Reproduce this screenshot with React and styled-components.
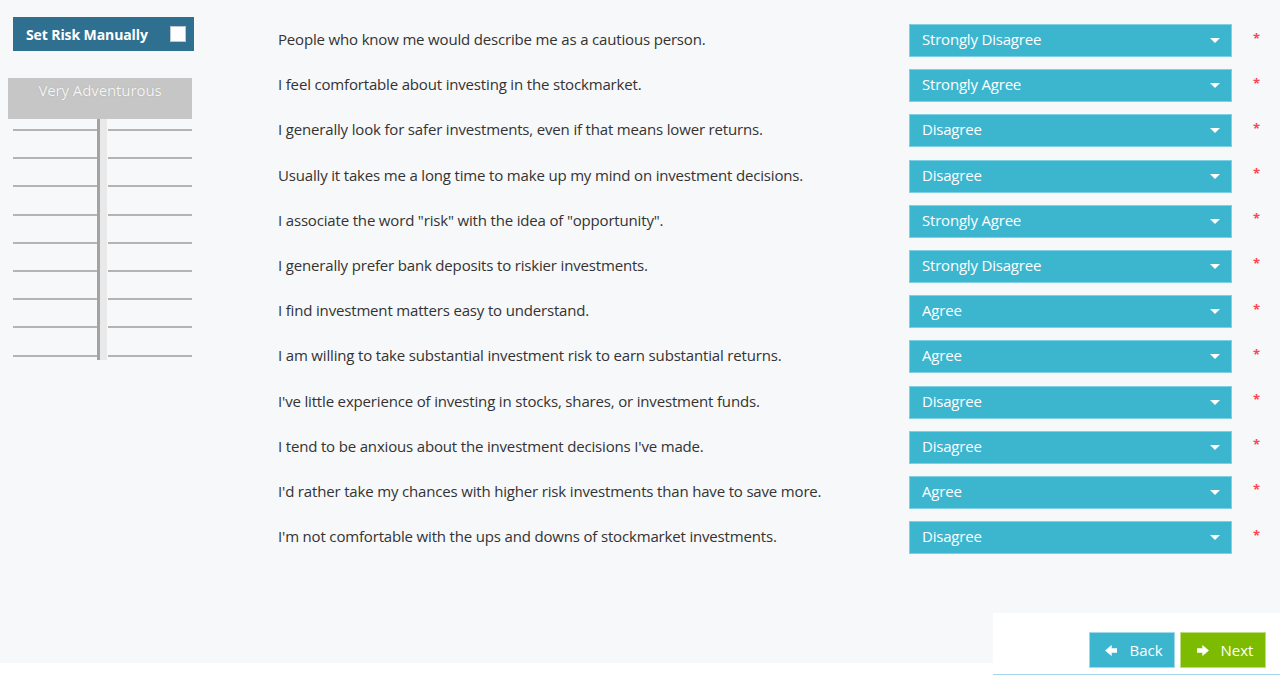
import React, { useState } from "react";
import styled, { createGlobalStyle } from "styled-components";

const questions = [
  ["People who know me would describe me as a cautious person.", "Strongly Disagree"],
  ["I feel comfortable about investing in the stockmarket.", "Strongly Agree"],
  ["I generally look for safer investments, even if that means lower returns.", "Disagree"],
  ["Usually it takes me a long time to make up my mind on investment decisions.", "Disagree"],
  ['I associate the word "risk" with the idea of "opportunity".', "Strongly Agree"],
  ["I generally prefer bank deposits to riskier investments.", "Strongly Disagree"],
  ["I find investment matters easy to understand.", "Agree"],
  ["I am willing to take substantial investment risk to earn substantial returns.", "Agree"],
  ["I've little experience of investing in stocks, shares, or investment funds.", "Disagree"],
  ["I tend to be anxious about the investment decisions I've made.", "Disagree"],
  ["I'd rather take my chances with higher risk investments than have to save more.", "Agree"],
  ["I'm not comfortable with the ups and downs of stockmarket investments.", "Disagree"],
];

const options = ["Strongly Disagree", "Disagree", "Neutral", "Agree", "Strongly Agree"];

// chunky arrow, points right unless flipped
function Arrow({ left }) {
  return (
    <svg width="12" height="11" viewBox="0 0 12 11" style={{ transform: left ? "scaleX(-1)" : "none" }}>
      <path d="M0 3.6H5.6V0.4L11.6 5.5L5.6 10.6V7.4H0Z" fill="#fff" stroke="#fff" strokeWidth="0.6" strokeLinejoin="round" />
    </svg>
  );
}

function App() {
  const [answers, setAnswers] = useState(questions.map((q) => q[1]));
  const [manual, setManual] = useState(false);

  return (
    <>
      <GlobalStyle />
      <Main>
        <Sidebar>
          <ManualButton onClick={() => setManual(!manual)}>
            Set Risk Manually
            <Check $checked={manual} />
          </ManualButton>
          <Scale>
            <ScaleHeader>Very Adventurous</ScaleHeader>
            <Ladder>
              <Rungs $side="left">
                {Array.from({ length: 9 }).map((_, i) => (
                  <Rung key={i} />
                ))}
              </Rungs>
              <Pole />
              <Rungs $side="right">
                {Array.from({ length: 9 }).map((_, i) => (
                  <Rung key={i} />
                ))}
              </Rungs>
            </Ladder>
          </Scale>
        </Sidebar>
        <Questions>
          {questions.map(([text], i) => (
            <Row key={i}>
              <Question>{text}</Question>
              <SelectWrap>
                <Select
                  value={answers[i]}
                  onChange={(e) => {
                    const next = [...answers];
                    next[i] = e.target.value;
                    setAnswers(next);
                  }}
                >
                  {options.map((o) => (
                    <option key={o}>{o}</option>
                  ))}
                </Select>
                <Caret />
              </SelectWrap>
              <Required>*</Required>
            </Row>
          ))}
        </Questions>
      </Main>
      <Footer>
        <FooterSpacer />
        <Actions>
          <NavButton $color="#3cb5cf">
            <Arrow left />
            Back
          </NavButton>
          <NavButton $color="#7dbb00">
            <Arrow />
            Next
          </NavButton>
        </Actions>
      </Footer>
    </>
  );
}

const GlobalStyle = createGlobalStyle`
  body {
    margin: 0;
    background: #ffffff;
    font-family: "Open Sans", "Noto Sans", sans-serif;
    overflow: hidden;
  }
`;

const Main = styled.div`
  display: flex;
  height: 613px;
  background: #f7f8fa;
  padding-left: 8px;
  box-sizing: border-box;
`;

const Sidebar = styled.div`
  width: 186px;
  flex-shrink: 0;
  padding-top: 17px;
`;

const ManualButton = styled.div`
  margin-left: 5px;
  width: 181px;
  height: 34px;
  background: #2f7090;
  color: #fff;
  font-weight: 700;
  font-size: 14px;
  letter-spacing: -0.1px;
  display: flex;
  align-items: center;
  justify-content: space-between;
  padding: 0 8px 0 13px;
  box-sizing: border-box;
  cursor: pointer;
`;

const Check = styled.span`
  width: 14px;
  height: 14px;
  background: ${(p) => (p.$checked ? "#cde9f3" : "#fff")};
  border: 1px solid #b9c8d0;
`;

const Scale = styled.div`
  margin-top: 27px;
  width: 184px;
`;

const ScaleHeader = styled.div`
  height: 41px;
  background: #c6c6c6;
  color: #f6f6f6;
  font-size: 15px;
  text-align: center;
  padding-top: 2px;
  box-sizing: border-box;
  text-shadow: 0 0 1px #9a9a9a;
  letter-spacing: -0.1px;
`;

const Ladder = styled.div`
  display: flex;
  height: 241px;
`;

const Rungs = styled.div`
  width: 84px;
  flex-shrink: 0;
  margin-left: ${(p) => (p.$side === "left" ? "5px" : "1px")};
  display: flex;
  flex-direction: column;
  gap: 26.2px;
  padding-top: 10px;
`;

const Rung = styled.div`
  height: 2px;
  background: #b4b4b4;
`;

const Pole = styled.div`
  width: 3px;
  flex-shrink: 0;
  background: #a3a3a3;
  border-right: 7px solid #e9e9e9;
`;

const Questions = styled.div`
  margin-left: 84px;
  padding-top: 24px;
  display: flex;
  flex-direction: column;
  gap: 12.2px;
`;

const Row = styled.div`
  display: flex;
  align-items: center;
  height: 33px;
`;

const Question = styled.div`
  width: 631px;
  font-size: 15px;
  color: #333;
  letter-spacing: -0.17px;
  margin-top: -3px;
`;

const SelectWrap = styled.div`
  position: relative;
  width: 323px;
  height: 33px;
`;

const Select = styled.select`
  appearance: none;
  width: 100%;
  height: 100%;
  background: #3cb5cf;
  border: 1px solid #7fd0e2;
  color: #fff;
  font-family: "Open Sans", "Noto Sans", sans-serif;
  font-size: 15px;
  letter-spacing: -0.2px;
  padding: 0 0 3px 12px;
  outline: none;
  cursor: pointer;
`;

const Caret = styled.span`
  position: absolute;
  right: 12px;
  top: 14px;
  width: 0;
  height: 0;
  border-left: 5px solid transparent;
  border-right: 5px solid transparent;
  border-top: 5px solid #fff;
  pointer-events: none;
`;

const Required = styled.span`
  margin-left: 21px;
  margin-top: -6px;
  color: #ff4455;
  font-size: 13px;
  font-weight: 700;
`;

const Footer = styled.div`
  display: flex;
  align-items: flex-start;
`;

const FooterSpacer = styled.div`
  flex: 1;
  height: 50px;
  background: #f7f8fa;
`;

const Actions = styled.div`
  width: 287px;
  height: 62px;
  background: #fff;
  border-bottom: 1px solid #a9d6ef;
  box-sizing: border-box;
  display: flex;
  justify-content: flex-end;
  align-items: flex-start;
  gap: 5px;
  padding: 19px 14px 0 0;
`;

const NavButton = styled.button`
  width: 86px;
  height: 36px;
  background: ${(p) => p.$color};
  border: 1px solid rgba(255, 255, 255, 0.5);
  color: #fff;
  font-family: "Open Sans", "Noto Sans", sans-serif;
  font-size: 15px;
  display: flex;
  align-items: center;
  justify-content: center;
  gap: 12px;
  padding: 0 0 0 4px;
  cursor: pointer;
`;

export default App;
